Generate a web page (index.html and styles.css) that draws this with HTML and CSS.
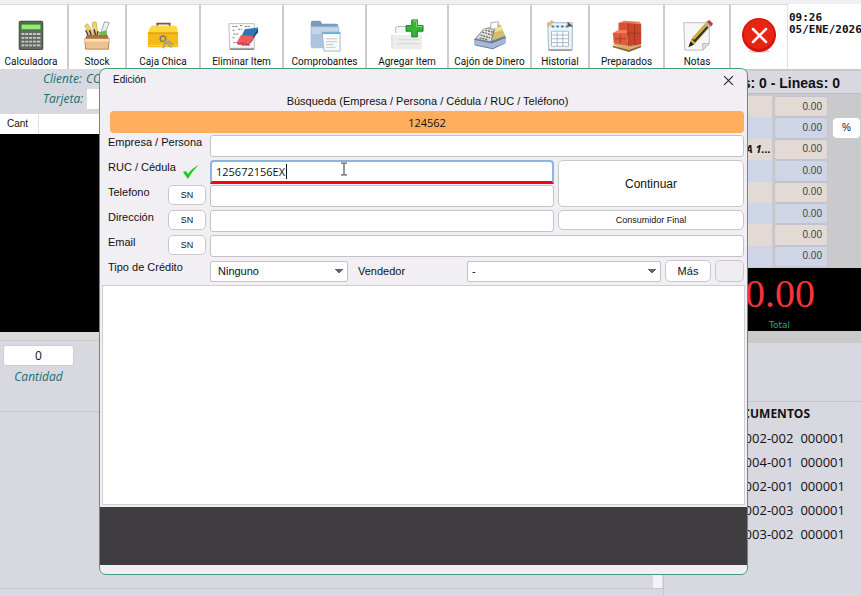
FILE: index.html
```html
<!DOCTYPE html>
<html lang="es">
<head>
<meta charset="utf-8">
<title>Punto de venta</title>
<link rel="stylesheet" href="styles.css">
</head>
<body>
<header class="toolbar">
  <button class="tool tool-first" type="button">
    <svg class="icon" viewBox="0 0 36 36"><rect x="5" y="3" width="26" height="31" rx="2" fill="#454b45"/><rect x="6" y="4" width="24" height="29" rx="1" fill="#626963"/><rect x="6" y="5" width="24" height="8" fill="#397d2c"/><rect x="8" y="7" width="20" height="5" fill="#98e878"/><g fill="#c9cdc9"><path d="M8 16h3v2H8zM12 16h3v2h-3zM16 16h3v2h-3zM20 16h3v2h-3zM24 16h4v2h-4zM8 20h3v2H8zM12 20h3v2h-3zM16 20h3v2h-3zM20 20h3v2h-3zM24 20h4v2h-4zM8 24h3v2H8zM12 24h3v2h-3zM16 24h3v2h-3zM20 24h3v2h-3zM24 24h4v2h-4zM8 28h3v2H8zM12 28h3v2h-3zM16 28h3v2h-3zM20 28h3v2h-3zM24 28h4v2h-4z"/></g></svg>
    <span>Calculadora</span></button>
  <button class="tool" type="button">
    <svg class="icon" viewBox="0 0 36 36"><path d="M13 5l4-1 2 16-4 1z" fill="#efd968" stroke="#b4a143" stroke-width=".7"/><path d="M26 4l5 1-6 15-4-1z" fill="#eef1f2" stroke="#8e9294" stroke-width=".8"/><path d="M5 8l3-2 8 13-4 2z" fill="#efd55a" stroke="#b39a3c" stroke-width=".6"/><path d="M6 13l4 8M10 13l3 8M15 12l2 8M19 14l-1 6" stroke="#4b3554" stroke-width="1.6"/><path d="M20 15l8-2 1 6-8 1z" fill="#75b64c"/><path d="M7 18h22l2 5H5z" fill="#a96f3d"/><path d="M5 22h26l-1 11H6z" fill="#eec18e" stroke="#a96e3d" stroke-width=".8"/><path d="M5 22h26v3H5z" fill="#ffe0b4"/></svg>
    <span>Stock</span></button>
  <button class="tool" type="button">
    <svg class="icon" viewBox="0 0 36 36"><path d="M12 9V6h13v3" fill="none" stroke="#765442" stroke-width="2"/><path d="M4 10l3-2h23l3 2 1 8H2z" fill="#ffd83e"/><path d="M2 15h32v14q0 2-2 2H4q-2 0-2-2z" fill="#f4bb16"/><path d="M2 16h32" stroke="#cf960d"/><path d="M3 29h30" stroke="#ffda4b"/><circle cx="18" cy="22" r="3" fill="none" stroke="#777a77" stroke-width="1.5"/><path d="M19 24l8 7M21 25l-3 7M23 24l6 5" stroke="#9a9d99" stroke-width="1.800"/></svg>
    <span>Caja Chica</span></button>
  <button class="tool" type="button">
    <svg class="icon" viewBox="0 0 36 36"><path d="M4 6h27v26H5z" fill="#fafbfa" stroke="#babcbc"/><path d="M5 33h26" stroke="#777" stroke-width="1.4"/><path d="M8 9h5M16 8h2M21 9h5M8 13h3M14 12h4M9 17h6M8 21h3M9 26h6M18 29h8" stroke="#65717d" stroke-dasharray="2 1"/><path d="M21 12l14-2-6 9-12 1z" fill="#2f76b6"/><path d="M35 10v5l-6 8v-4z" fill="#1d5289"/><path d="M17 18l13 1-5 7-12-1z" fill="#f05861"/><path d="M13 25l12 1 5-7v4l-5 6-12-1z" fill="#d9444f"/></svg>
    <span>Eliminar Item</span></button>
  <button class="tool" type="button">
    <svg class="icon" viewBox="0 0 36 36"><path d="M3 5q0-2 2-2h8l2 3h15q2 0 2 2v23H5q-2 0-2-2z" fill="#7d9aba"/><path d="M3 9h30v21q0 2-2 2H5q-2 0-2-2z" fill="#adc4de"/><path d="M4 10h28v7H4z" fill="#c3d5e8"/><path d="M15 15h19v20H17z" fill="#f9fafb" stroke="#a9b4bd"/><path d="M15 15h19v2H15z" fill="#65b0da"/><path d="M19 22h12M19 25h12M19 28h8M19 31h10" stroke="#c0c4c8"/></svg>
    <span>Comprobantes</span></button>
  <button class="tool" type="button">
    <svg class="icon" viewBox="0 0 36 36"><path d="M6 20v-9q0-2 2-2h11l2 4h12v20" fill="#f6f6f6" stroke="#b6b6b6"/><path d="M1 17h33v16H2z" fill="#ececec"/><path d="M1 17h33" stroke="#fff" stroke-width="2"/><path d="M2 18v14M8 23h23M8 27h23" stroke="#d4d4d4"/><path d="M23 2h6v6h6v6h-6v6h-6v-6h-6V8h6z" fill="#39b33b" stroke="#16831c"/><path d="M24 3h4v6h6" fill="none" stroke="#84e27d"/></svg>
    <span>Agregar Item</span></button>
  <button class="tool" type="button">
    <svg class="icon" viewBox="0 0 36 36"><path d="M1 23l10-11 18-3 6 12-1 6-13 6-19-4z" fill="#657b9f"/><path d="M1 23l19 4 15-6v5l-14 6-20-4z" fill="#a7bad5"/><path d="M3 22L12 11l10 1-3 13z" fill="#e4e3dc" stroke="#8b8f91" stroke-width=".8"/><path d="M14 10l15-3 5 12-14 5 3-11z" fill="#d9bd65"/><path d="M19 5l8-1-1 7-7 1z" fill="#fff" stroke="#91969a" stroke-width=".8"/><path d="M24 10l6-1 1 4-8 2z" fill="#f3e09a"/><path d="M8 18l10 3M10 15l10 3M7 21l9 2M13 13l8 2" stroke="#565c62" stroke-width="1.300" stroke-dasharray="2 1"/></svg>
    <span>Cajón de Dinero</span></button>
  <button class="tool" type="button">
    <svg class="icon" viewBox="0 0 36 36"><path d="M5 5h26v29H6z" fill="#edf4f7" stroke="#8d9da9" stroke-width=".8"/><path d="M9 9h20" stroke="#3e86b5" stroke-width="2" stroke-dasharray="3 2"/><path d="M9 14h18v16H9zM9 18h18M9 22h18M9 26h18M15 14v16M21 14v16" fill="#fff" stroke="#a7b7c7"/><path d="M4 7l5-5 3 2-6 6z" fill="#e0b985"/><path d="M26 4l6 5h-6z" fill="#46525d"/><path d="M6 34h24" stroke="#8f9699" stroke-width="1.500"/></svg>
    <span>Historial</span></button>
  <button class="tool" type="button">
    <svg class="icon" viewBox="0 0 36 36"><path d="M3 28l12-4 18 5-13 6z" fill="#d5ad70"/><path d="M3 29l17 5 13-5v2l-13 5-17-5z" fill="#8e6236"/><path d="M9 5l10-1v13H9z" fill="#d95032"/><path d="M19 5l14 1v10l-14 1z" fill="#c9472f"/><path d="M18 16h15v12l-14 2z" fill="#c9432d"/><path d="M3 16h15v13l-14-2z" fill="#df5b3b"/><path d="M3 16l5-3h10v3z" fill="#f18262"/><path d="M19 5v24M19 16h14M26 6v22M11 18v9M5 22h12" stroke="#942d1f" stroke-width=".7"/><path d="M10 5l5-2 16 1 2 2z" fill="#ef7454"/></svg>
    <span>Preparados</span></button>
  <button class="tool" type="button">
    <svg class="icon" viewBox="0 0 36 36"><path d="M4 5h27v22l-7 7H5z" fill="#f7f7f7" stroke="#bbb"/><path d="M24 34v-7h7z" fill="#ddd" stroke="#aaa" stroke-width=".7"/><path d="M9 31l3-9L28 4l5 4-17 19z" fill="#d5ad40"/><path d="M13 23L29 6l3 2-16 18z" fill="#353534"/><path d="M14 22L29 6l1 1-15 16z" fill="#e7c557"/><path d="M28 4l3-2 4 4-2 3z" fill="#c93b31"/><path d="M26 6l2-2 5 5-2 2z" fill="#b8bbc0"/><path d="M9 31l2-6 4 3z" fill="#222"/></svg>
    <span>Notas</span></button>
  <button class="tool tool-exit" type="button" aria-label="Salir">
    <svg class="icon" viewBox="0 0 36 36"><ellipse cx="18" cy="34" rx="11" ry="2" fill="#ddd"/><circle cx="18" cy="18" r="17" fill="#d5140b"/><circle cx="18" cy="17" r="15" fill="#e82413"/><path d="M12 12l13 13M25 12L12 25" stroke="#fff" stroke-width="2.500" stroke-linecap="round"/></svg>
  </button>
  <div class="clock"><div>09:26</div><div>05/ENE/2026</div></div>
</header>

<main class="workspace">
  <section class="sale">
    <div class="client">
      <div class="client-row"><span>Cliente:</span><span>CO</span></div>
      <div class="client-row"><label for="card">Tarjeta:</label><input id="card" class="card-input" type="text"></div>
    </div>
    <table class="items"><thead><tr><th class="qty-head">Cant</th><th></th></tr></thead></table>
    <div class="items-body"></div>
    <div class="strip"></div>
    <div class="quantity"><input id="qty" type="text" value="0"><label for="qty">Cantidad</label></div>
    <div class="notes"><div class="scroll-end"></div></div>
    <div class="status"></div>
  </section>
  <aside class="summary">
    <h2 class="counter">Items: 0 - Lineas: 0</h2>
    <div class="totals">
      <div class="totals-list">
        <span class="name"></span><output class="amount">0.00</output>
        <span class="name"></span><output class="amount">0.00</output>
        <span class="name">IVA 1...</span><output class="amount">0.00</output>
        <span class="name"></span><output class="amount">0.00</output>
        <span class="name"></span><output class="amount">0.00</output>
        <span class="name"></span><output class="amount">0.00</output>
        <span class="name"></span><output class="amount">0.00</output>
        <span class="name"></span><output class="amount">0.00</output>
      </div>
      <button class="percent" type="button">%</button>
    </div>
    <div class="grand"><div class="grand-value">0.00</div><div class="grand-label">Total</div></div>
    <div class="summary-gap"></div>
    <div class="docs">
      <h3>DOCUMENTOS</h3>
      <div class="doc"><span>002-002</span><span>000001</span></div>
      <div class="doc"><span>004-001</span><span>000001</span></div>
      <div class="doc"><span>002-001</span><span>000001</span></div>
      <div class="doc"><span>002-003</span><span>000001</span></div>
      <div class="doc"><span>003-002</span><span>000001</span></div>
    </div>
  </aside>
</main>

<div class="dialog" role="dialog" aria-labelledby="dialog-title">
  <div class="dialog-bar">
    <span id="dialog-title">Edición</span>
    <button class="close" type="button" aria-label="Cerrar"><svg viewBox="0 0 10 10"><path d="M1 1l8 8M9 1L1 9" stroke="#222" fill="none"/></svg></button>
  </div>
  <form class="form">
    <label class="search-label" for="search">Búsqueda (Empresa / Persona / Cédula / RUC / Teléfono)</label>
    <input class="search" id="search" type="text" value="124562">
    <div class="fields">
      <label for="company">Empresa / Persona</label>
      <input class="field wide" id="company" type="text">

      <div class="label-cell"><label for="ruc">RUC / Cédula</label>
        <svg class="check" viewBox="0 0 18 16"><path d="M1 8l5 7Q10 7 17 1 10 4 6 10L4 7z" fill="#12cf1b"/></svg></div>
      <div class="field-focus"><input class="field" id="ruc" type="text" value="125672156EX"><i class="caret"></i>
        <svg class="ibeam" viewBox="0 0 8 14"><path d="M1 1h2l1 1 1-1h2M4 2v10M1 13h2l1-1 1 1h2" fill="none" stroke="#777" stroke-width="1.500"/></svg></div>
      <button class="btn continue" type="button">Continuar</button>

      <div class="label-cell"><label for="phone">Telefono</label><button class="btn sn" type="button">SN</button></div>
      <input class="field" id="phone" type="text">

      <div class="label-cell"><label for="address">Dirección</label><button class="btn sn" type="button">SN</button></div>
      <input class="field" id="address" type="text">
      <button class="btn final" type="button">Consumidor Final</button>

      <div class="label-cell"><label for="email">Email</label><button class="btn sn" type="button">SN</button></div>
      <input class="field wide" id="email" type="text">

      <label for="credit">Tipo de Crédito</label>
      <div class="wide options">
        <select class="select credit" id="credit"><option>Ninguno</option></select>
        <label class="seller-label" for="seller">Vendedor</label>
        <select class="select seller" id="seller"><option>-</option></select>
        <button class="btn more" type="button">Más</button>
        <button class="btn blank" type="button" aria-label="Opción" disabled></button>
      </div>
    </div>
  </form>
  <div class="results"></div>
  <div class="dialog-dark"></div>
</div>
</body>
</html>
```

FILE: styles.css
```css
* { box-sizing: border-box; }

body {
  margin: 0;
  min-height: 100vh;
  display: flex;
  flex-direction: column;
  position: relative;
  overflow: hidden;
  background: #d8d8e0;
  color: #111;
  font: 11px/14px "Liberation Sans", Arial, sans-serif;
}

button, input, select { font: inherit; color: inherit; margin: 0; }

/* Toolbar */
.toolbar {
  display: grid;
  grid-template-columns: 69fr 58fr 74fr 83fr 83fr 82fr 83fr 58fr 75fr 66fr 57fr 73fr;
  height: 69px;
  border-top: 4px solid #f0eff3;
  background: #fff;
}
.tool {
  display: flex;
  flex-direction: column;
  align-items: center;
  min-width: 0;
  padding: 12px 0 0;
  gap: 2px;
  border: 0;
  border-top: 1px solid #dadada;
  border-right: 2px solid #cbcbcd;
  background: #fff;
  font: 10px/14px Roboto, "Liberation Sans", sans-serif;
  white-space: nowrap;
}
.tool-first { padding-right: 5px; }
.tool-exit { border-right: 1px solid #e2e2e2; }
.icon { width: 36px; height: 36px; flex: none; padding: 1px; }
.tool-exit .icon { padding: 0; }
.clock {
  min-width: 0;
  padding: 8px 0 0 1px;
  font: bold 11px/12px "DejaVu Sans Mono", monospace;
  white-space: nowrap;
}

/* Workspace */
.workspace {
  flex: 1;
  display: grid;
  grid-template-columns: minmax(0, 1fr) 197px;
}
.sale { display: flex; flex-direction: column; border-right: 1px solid #c8c8ce; }
.client {
  height: 45px;
  padding-left: 43px;
  color: #176f6f;
  font: italic 12px/20px "Open Sans", sans-serif;
}
.client-row { display: flex; gap: 4px; height: 20px; }
.card-input { width: 100px; height: 20px; border: 0; background: #fff; }
.items { width: 100%; border-collapse: collapse; background: #fff; }
.items th { height: 20px; padding: 0; font-weight: normal; }
.items .qty-head { width: 38px; padding-left: 7px; border-right: 1px solid #ddd; text-align: left; font-size: 10px; }
.items-body { height: 198px; background: #000; }
.strip { height: 9px; background: #d9d9d9; border-bottom: 1px solid #c8c8cc; }
.quantity {
  display: flex;
  flex-direction: column;
  align-items: center;
  width: 77px;
  height: 70px;
  padding-top: 4px;
  gap: 2px;
  color: #176f6f;
  font: italic 12px/18px "Open Sans", sans-serif;
}
.quantity input {
  width: 71px;
  height: 21px;
  border: 1px solid #cdcdd2;
  border-radius: 3px;
  background: #fff;
  color: #111;
  font: 12px "Open Sans", sans-serif;
  text-align: center;
}
.notes {
  flex: 1;
  display: flex;
  align-items: flex-end;
  justify-content: flex-end;
  border-top: 1px solid #c4c4ca;
  border-bottom: 1px solid #c8c8ce;
}
.scroll-end { width: 9px; height: 20px; margin-right: 1px; background: #f3f2f6; }
.status { height: 7px; }

.summary { display: flex; flex-direction: column; min-width: 0; }
.counter {
  height: 25px;
  margin: 0;
  padding: 3px 21px 0 0;
  border-top: 2px solid #c8c8c8;
  border-bottom: 1px solid #bdbdc1;
  font: bold 14px/18px "Liberation Sans", sans-serif;
  text-align: right;
  white-space: nowrap;
}
.totals {
  display: flex;
  gap: 5px;
  height: 174px;
  padding: 2px 1px 1px 0;
  background: #cacacc;
}
.totals-list {
  flex: 1;
  display: grid;
  grid-template-columns: minmax(0, 1fr) 54px;
  grid-auto-rows: 1fr;
  column-gap: 2px;
}
.name, .amount {
  display: flex;
  align-items: center;
  justify-content: flex-end;
  background: #ced5e7;
}
.name { padding-right: 1px; font: bold italic 11px/14px "Open Sans", sans-serif; }
.amount { padding-right: 5px; border: 1px solid #c1c4cd; border-radius: 3px; color: #444; font-size: 10px; }
.name:nth-child(4n + 1), .amount:nth-child(4n + 2) { background: #e3dad5; }
.percent {
  width: 27px;
  height: 20px;
  margin-top: 22px;
  padding: 0;
  border: 0;
  border-radius: 4px;
  background: #fff;
  font-size: 10px;
}
.grand { height: 63px; background: #000; }
.grand-value {
  padding: 6px 46px 0 0;
  color: #f9323b;
  font: 40px/40px "Liberation Serif", serif;
  text-align: right;
}
.grand-label {
  padding-right: 71px;
  color: #08bd49;
  font: 9px/22px "DejaVu Sans", sans-serif;
  text-align: right;
}
.summary-gap { height: 12px; background: #cacacc; }
.docs {
  margin-top: 58px;
  padding-right: 16px;
  border-top: 1px solid #c4c4ca;
  font: 13px/24px "Open Sans", sans-serif;
}
.docs h3 {
  margin: 0;
  padding-right: 35px;
  font: bold 12px/24px "Open Sans", sans-serif;
  text-align: right;
}
.doc { display: flex; justify-content: flex-end; gap: 7px; }

/* Edit dialog */
.dialog {
  position: absolute;
  top: 68px;
  left: 99px;
  right: 113px;
  padding-bottom: 9px;
  border: 1px solid #469f72;
  border-radius: 7px;
  background: #f1eff3;
}
.dialog-bar {
  display: flex;
  justify-content: space-between;
  align-items: center;
  height: 22px;
  padding: 0 13px;
  font-size: 10px;
}
.close { display: flex; padding: 0; border: 0; background: none; }
.close svg { width: 11px; height: 11px; }
.form { display: flex; flex-direction: column; padding: 0 3px 0 8px; }
.search-label { height: 20px; padding: 3px 0 0 3px; text-align: center; }
.search {
  height: 22px;
  margin-left: 2px;
  padding: 0;
  border: 0;
  border-radius: 4px;
  background: #ffae5e;
  font: 11px "Open Sans", sans-serif;
  text-align: center;
}
.fields {
  display: grid;
  grid-template-columns: 98px minmax(0, 1fr) 186px;
  grid-auto-rows: 22px;
  gap: 3px 4px;
  margin-top: 2px;
}
.fields label { white-space: nowrap; }
.label-cell { display: flex; justify-content: space-between; align-items: flex-start; }
.check { width: 18px; height: 16px; margin: 4px 6px 0 0; }
.field {
  width: 100%;
  height: 22px;
  padding: 0 6px;
  border: 1px solid #c3c3c7;
  border-radius: 3px;
  outline: 0;
  background: #fff;
}
.wide { grid-column: 2 / 4; }
.field-focus { position: relative; }
.field-focus .field {
  height: 24px;
  border: 2px solid #8bb5e2;
  border-bottom: 3px solid #f60409;
  border-radius: 4px 4px 0 0;
  padding: 0 4px;
  font: 11px "Open Sans", sans-serif;
}
.caret { position: absolute; left: 76px; top: 4px; width: 1px; height: 15px; background: #111; }
.ibeam { position: absolute; left: 130px; top: 2px; width: 8px; height: 14px; }
.btn {
  padding: 0;
  border: 1px solid #c8c8cb;
  border-radius: 5px;
  background: #fff;
}
.sn { width: 38px; height: 20px; font-size: 9px; }
.continue { grid-row: 2 / 4; grid-column: 3; font-size: 12px; }
.final { height: 20px; font-size: 9px; }
.options { display: flex; align-items: center; gap: 4px; }
.select {
  appearance: none;
  height: 21px;
  padding: 0 7px;
  border: 1px solid #c3c3c7;
  border-radius: 2px;
  background:
    linear-gradient(to bottom right, #666 50%, transparent 50%) right 4px center / 4px 5px no-repeat,
    linear-gradient(to bottom left, #666 50%, transparent 50%) right 8px center / 4px 5px no-repeat,
    #fff;
}
.credit { width: 138px; }
.seller-label { width: 111px; padding-left: 6px; }
.seller { flex: 1; padding: 0 4px; }
.more { width: 46px; height: 22px; }
.blank { width: 29px; height: 22px; background: #efedf1; }
.results {
  height: 220px;
  margin: 3px 2px 2px;
  border: 1px solid #cfcfd2;
  background: #fff;
}
.dialog-dark { height: 58px; background: #403d40; }
```
